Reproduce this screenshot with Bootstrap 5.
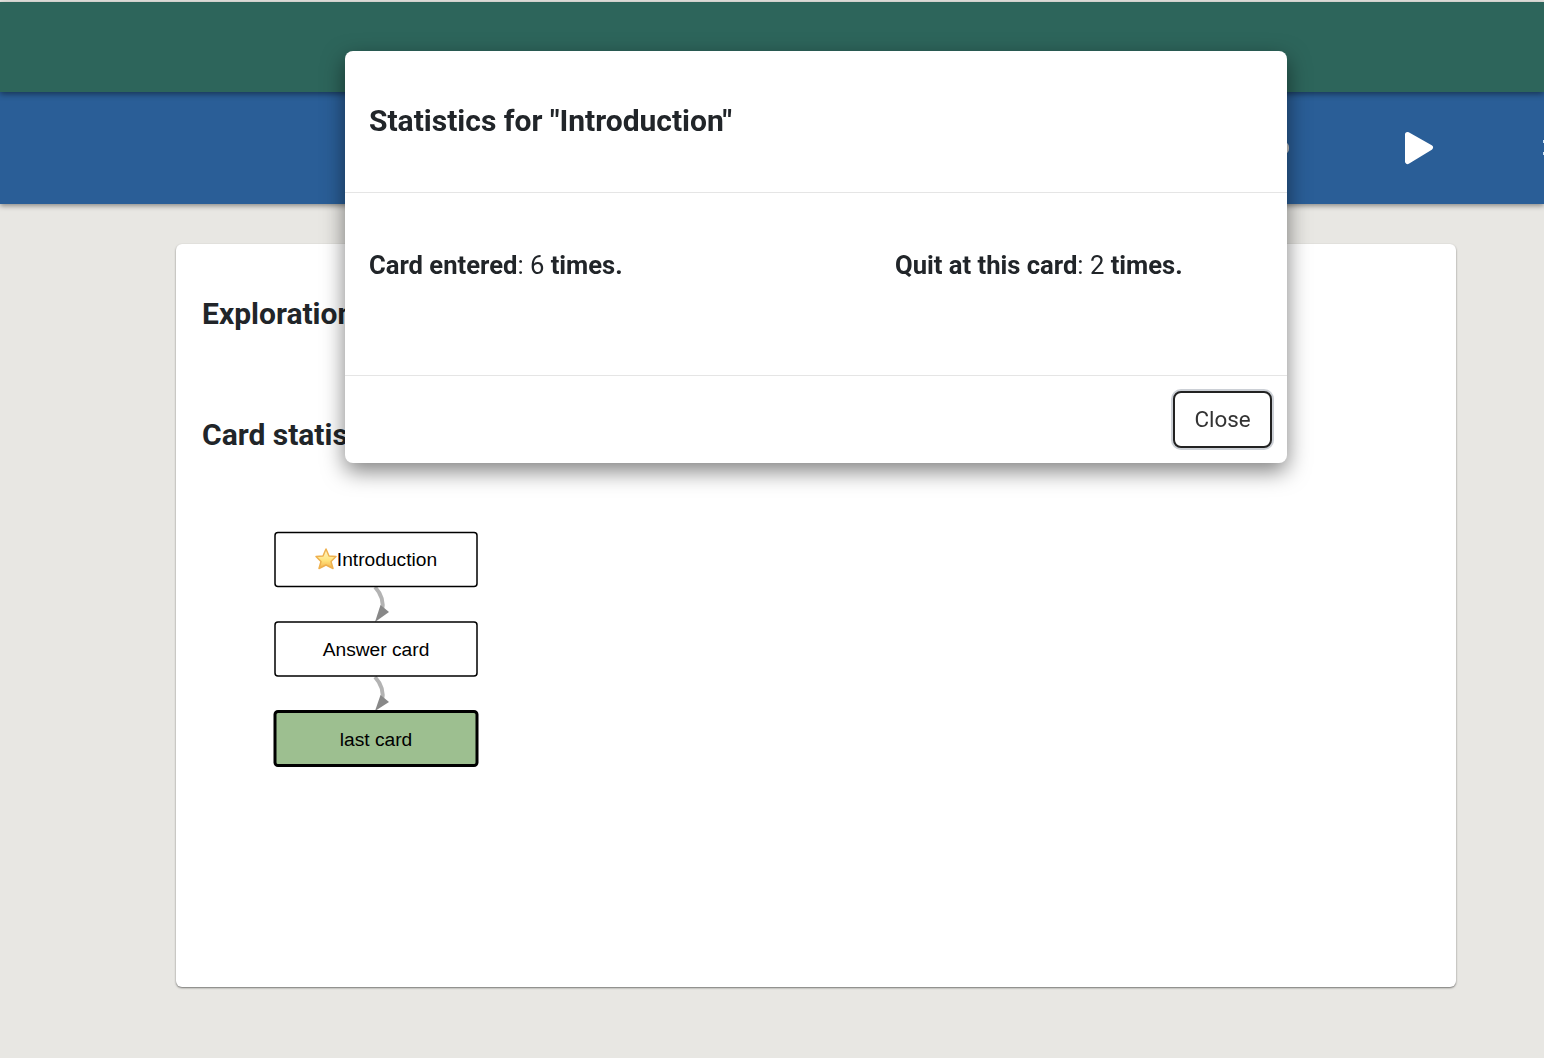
<!DOCTYPE html>
<html lang="en">
<head>
    <meta charset="UTF-8">
    <meta name="viewport" content="width=device-width, initial-scale=1.0">
    <title>Statistics</title>
    <link href="https://cdn.jsdelivr.net/npm/bootstrap@5.3.0/dist/css/bootstrap.min.css" rel="stylesheet">
    <style>
        html, body {
            height: 100%;
            overflow: hidden;
        }
        body {
            background-color: #e8e7e3;
            font-family: Roboto, "Liberation Sans", sans-serif;
            color: #212529;
            padding-top: 2px;
        }
        /* Header bars */
        .top-bar {
            height: 90px;
            background-color: #2d655b;
            box-shadow: 0 2px 6px rgba(0, 0, 0, 0.45);
            position: relative;
            z-index: 2;
        }
        .tool-bar {
            height: 112px;
            background-color: #2a5e97;
            box-shadow: 0 2px 5px rgba(0, 0, 0, 0.4);
            position: relative;
            z-index: 1;
        }
        .tool-btns {
            width: 1544px;
            height: 112px;
            overflow: hidden;
        }
        .tool-icon {
            flex: none;
            display: block;
        }
        .tool-hidden {
            margin-left: 1259px;
        }
        .tool-play {
            margin-left: 115px;
        }
        .tool-more {
            margin-left: 109px;
        }
        /* Statistics card */
        .stats-card {
            width: 1280px;
            height: 743px;
            margin: 40px 0 0 176px;
            padding: 52px 26px 0;
            background-color: #fff;
            border-radius: 6px;
            box-shadow: 0 1px 2px rgba(0, 0, 0, 0.5);
        }
        .stats-title {
            font-size: 30px;
            line-height: 36px;
            font-weight: 700;
            white-space: nowrap;
            margin: 0;
        }
        .stats-title-second {
            margin-top: 85px;
        }
        .graph-canvas {
            display: block;
            margin-top: 69px;
        }
        .graph-canvas text {
            font-family: "Liberation Sans", sans-serif;
            font-size: 19.2px;
            fill: #000;
            text-anchor: middle;
        }
        /* Modal */
        .stats-modal .modal-dialog {
            width: 942px;
            max-width: 942px;
            margin: 51px 0 0 345px;
        }
        .stats-modal .modal-content {
            border: 0;
            border-radius: 8px;
            box-shadow: 0 8px 22px rgba(0, 0, 0, 0.5);
        }
        .stats-modal .modal-header {
            height: 142px;
            padding: 0 24px 2px;
            border-bottom: 1px solid #e5e5e5;
        }
        .stats-modal .modal-title {
            font-size: 30px;
            font-weight: 700;
            line-height: 36px;
        }
        .stats-modal .modal-body {
            height: 182px;
            padding: 56px 24px 0;
            flex: none;
            font-size: 25.6px;
            line-height: 32px;
        }
        .stat-cell {
            width: 526px;
            flex: none;
        }
        .stats-modal .modal-footer {
            height: 88px;
            padding: 0 15px 0 0;
            border-top: 1px solid #e5e5e5;
            align-items: center;
        }
        .close-btn {
            width: 99px;
            height: 57px;
            margin: 0;
            padding: 0;
            font-size: 22.4px;
            color: #333;
            background-color: #fff;
            border: 2px solid #222;
            border-radius: 8px;
            box-shadow: 0 0 0 2px #ccd0d6;
        }
    </style>
</head>
<body>
    <div class="top-bar"></div>
    <nav class="tool-bar">
        <div class="tool-btns d-flex align-items-center">
            <svg class="tool-icon tool-hidden" width="30" height="32" viewBox="0 0 30 32"><rect x="0" y="10" width="30" height="12" rx="5" fill="#c9c9c9"/></svg>
            <svg class="tool-icon tool-play" width="30" height="34" viewBox="0 0 30 34"><path d="M3.500 3.500 L26.500 16.500 L3.500 30.500 Z" fill="#fff" stroke="#fff" stroke-width="5" stroke-linejoin="round"/></svg>
            <svg class="tool-icon tool-more" width="10" height="16" viewBox="0 0 10 16"><rect y="0" width="10" height="3" fill="#cfe3f5"/><rect y="12" width="10" height="3" fill="#cfe3f5"/></svg>
        </div>
    </nav>

    <main class="stats-card">
        <h3 class="stats-title">Exploration Statistics</h3>
        <h3 class="stats-title stats-title-second">Card statistics</h3>
        <svg class="graph-canvas" width="320" height="250" viewBox="202 522 320 250">
            <defs>
                <linearGradient id="starFill" x1="0" y1="0" x2="0" y2="1">
                    <stop offset="0" stop-color="#fff8cf"/>
                    <stop offset="0.6" stop-color="#ffe27a"/>
                    <stop offset="1" stop-color="#f4b04a"/>
                </linearGradient>
            </defs>
            <path d="M375 587 Q385 598 382 611" fill="none" stroke="#b3b3b3" stroke-width="4"/>
            <path d="M389 612 L380.500 605 L375 622 Z" fill="#888"/>
            <path d="M375 677 Q385 688 382 701" fill="none" stroke="#b3b3b3" stroke-width="4"/>
            <path d="M389 702 L380.500 695 L375 711 Z" fill="#888"/>

            <rect x="275" y="532.5" width="202" height="54" rx="3" fill="#fff" stroke="#000" stroke-width="1.500"/>
            <rect x="275" y="622" width="202" height="54" rx="3" fill="#fff" stroke="#000" stroke-width="1.500"/>
            <rect x="275" y="711.5" width="202" height="54" rx="3" fill="#9dbf90" stroke="#000" stroke-width="3"/>

            <polygon points="326,549 329,556 336,556.500 331,561.500 333,568.500 326,565 319,568.500 321,561.500 316,556.500 323,556" fill="url(#starFill)" stroke="#eeb04e" stroke-width="1.500" stroke-linejoin="round"/>
            <text x="387" y="566">Introduction</text>
            <text x="376" y="656">Answer card</text>
            <text x="376" y="746">last card</text>
        </svg>
    </main>

    <div class="modal d-block stats-modal" tabindex="-1">
        <div class="modal-dialog">
            <div class="modal-content">
                <div class="modal-header">
                    <h4 class="modal-title">Statistics for "Introduction"</h4>
                </div>
                <div class="modal-body d-flex">
                    <div class="stat-cell"><b>Card entered</b>: 6 <b>times.</b></div>
                    <div class="stat-cell"><b>Quit at this card</b>: 2 <b>times.</b></div>
                </div>
                <div class="modal-footer">
                    <button type="button" class="btn close-btn">Close</button>
                </div>
            </div>
        </div>
    </div>

    <script src="https://cdn.jsdelivr.net/npm/bootstrap@5.3.0/dist/js/bootstrap.bundle.min.js"></script>
</body>
</html>
